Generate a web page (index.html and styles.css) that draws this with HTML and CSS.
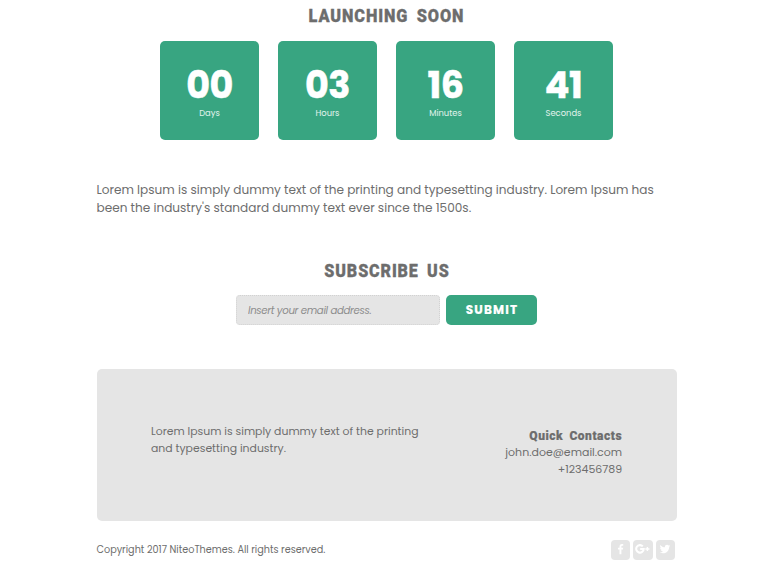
FILE: index.html
```html
<!DOCTYPE html>
<html lang="en">
<head>
<meta charset="utf-8">
<title>Launching Soon</title>
<link rel="stylesheet" href="styles.css">
</head>
<body>
<main class="page">
  <h2 class="heading"><span>LAUNCHING SOON</span></h2>
  <section class="countdown">
    <div class="tile"><strong>00</strong><span>Days</span></div>
    <div class="tile"><strong>03</strong><span>Hours</span></div>
    <div class="tile"><strong>16</strong><span>Minutes</span></div>
    <div class="tile"><strong>41</strong><span>Seconds</span></div>
  </section>
  <p class="intro">Lorem Ipsum is simply dummy text of the printing and typesetting industry. Lorem Ipsum has<br>been the industry's standard dummy text ever since the 1500s.</p>
  <h2 class="heading subscribe"><span>SUBSCRIBE US</span></h2>
  <form class="form">
    <input class="email" type="email" placeholder="Insert your email address.">
    <button class="submit" type="button">SUBMIT</button>
  </form>
  <section class="panel">
    <p class="about">Lorem Ipsum is simply dummy text of the printing<br>and typesetting industry.</p>
    <div class="contacts">
      <h3>Quick Contacts</h3>
      <p class="mail">john.doe@email.com</p>
      <p class="phone">+123456789</p>
    </div>
  </section>
  <footer class="footer">
    <p class="copyright">Copyright 2017 NiteoThemes. All rights reserved.</p>
    <div class="social">
      <a aria-label="Facebook"><svg viewBox="0 0 1792 1792" width="11" height="11"><path fill="currentColor" d="M1343 12v264h-157q-86 0-116 36t-30 108v189h293l-39 296h-254v759h-306v-759h-255v-296h255v-218q0-186 104-288.5t277-102.5q147 0 228 12z"/></svg></a>
      <a aria-label="Google Plus"><svg viewBox="0 0 16 12" width="15" height="12"><path fill="none" stroke="currentColor" stroke-width="2.2" d="M8.3 3.2A4 4 0 1 0 9.3 6H5.5"/><path fill="none" stroke="currentColor" stroke-width="1.5" d="M11 6h4.4M13.2 3.8v4.4"/></svg></a>
      <a aria-label="Twitter"><svg viewBox="0 0 1792 1792" width="12" height="12"><path fill="currentColor" d="M1684 408q-67 98-162 167 1 14 1 42 0 130-38 259.5t-115.5 248.5-184.5 210.5-258 146-323 54.5q-271 0-496-145 35 4 78 4 225 0 401-138-105-2-188-64.5t-114-159.5q33 5 61 5 43 0 85-11-112-23-185.5-111.5t-73.5-205.5v-4q68 38 146 41-66-44-105-115t-39-154q0-88 44-163 121 149 294.5 238.5t371.5 99.5q-8-38-8-74 0-134 94.5-228.5t228.5-94.5q140 0 236 102 109-21 205-78-37 115-142 178 93-10 186-50z"/></svg></a>
    </div>
  </footer>
</main>
</body>
</html>
```
FILE: styles.css
```css
* { box-sizing: border-box; }
body { margin: 0; background: #fff; color: #6d6d6d; font-family: Poppins, Inter, sans-serif; overflow: hidden; }
h2, h3, p { margin: 0; white-space: nowrap; }
.page { width: 580px; margin: 0 0 0 96.5px; }
.heading { height: 41px; padding-top: 4px; text-align: center; font: 900 18.5px/24px Roboto, sans-serif; letter-spacing: 1px; word-spacing: 4px; -webkit-text-stroke: .3px #6d6d6d; }
.heading span { display: inline-block; transform: scaleX(.88); }
.subscribe span { transform: scaleX(.87); }
.countdown { display: flex; justify-content: center; gap: 19px; height: 99px; }
.tile { width: 99px; height: 99px; border-radius: 5px; background: #38a581; color: #fff; text-align: center; padding-top: 25px; }
.tile strong { display: block; font-size: 36.5px; font-weight: 700; line-height: 40px; letter-spacing: -.5px; -webkit-text-stroke: .5px #fff; }
.tile span { display: block; font-size: 8.4px; line-height: 15px; color: #e2f3ed; }
.intro { margin-top: 41px; font-size: 13px; line-height: 18px; transform: translateX(-.5px) scaleX(.929); transform-origin: left; }
.subscribe { margin-top: 38px; height: 40px; }
.form { display: flex; justify-content: center; gap: 6px; height: 30px; }
.email { width: 204px; height: 30px; border: 1px dotted #d2d2d2; border-radius: 4px; background: #e5e5e5; padding: 2px 11px 0; font: italic 10.2px/26px Poppins, Inter, sans-serif; letter-spacing: -.34px; }
.email::placeholder { color: #8c8c8c; opacity: 1; }
.submit { width: 91px; height: 30px; border: 0; border-radius: 5px; padding: 0 0 0 1px; background: #38a581; color: #fff; font: 700 12px/30px Poppins, Inter, sans-serif; letter-spacing: 1.2px; -webkit-text-stroke: .2px #fff; }
.panel { display: flex; justify-content: space-between; margin-top: 44px; height: 152px; padding: 54px 54.5px; border-radius: 5px; background: #e5e5e5; font-size: 11.3px; line-height: 16.5px; }
.about { transform: scaleX(.962); transform-origin: left; }
.contacts { text-align: right; padding-top: 4px; }
.contacts p { transform: scaleX(.972); transform-origin: right; }
.contacts h3 { font: 900 13.5px/17px Roboto, sans-serif; letter-spacing: .6px; word-spacing: 3px; transform: scaleX(.89); transform-origin: right; -webkit-text-stroke: .2px #6d6d6d; }
.footer { display: flex; justify-content: space-between; align-items: center; height: 20px; margin-top: 19px; padding-right: 1.5px; }
.copyright { font-size: 11.2px; line-height: 20px; transform: translate(-.5px, -1px) scaleX(.864); transform-origin: left; }
.social { display: flex; gap: 3px; }
.social a { display: flex; align-items: center; justify-content: center; width: 19.5px; height: 20px; padding-bottom: 2px; border-radius: 4px; background: #e5e5e5; color: #fff; }
```
